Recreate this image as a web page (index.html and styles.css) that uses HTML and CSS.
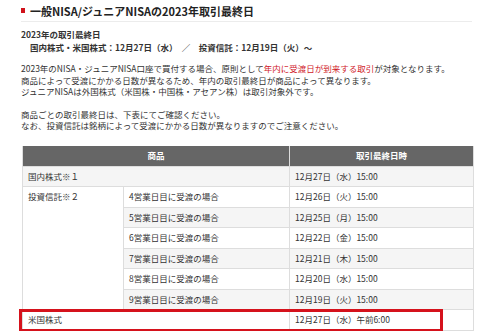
FILE: index.html
```html
<!DOCTYPE html>
<html lang="ja">
<head>
<meta charset="utf-8">
<link rel="stylesheet" href="styles.css">
</head>
<body>
<div class="page">
  <h2 class="title"><span class="mark"></span>一般NISA/ジュニアNISAの2023年取引最終日</h2>
  <div class="lastday">
    <p class="lastday-head">2023年の取引最終日</p>
    <p class="lastday-body">国内株式・米国株式：12月27日（水）　／　投資信託：12月19日（火）～</p>
  </div>
  <p class="para">2023年のNISA・ジュニアNISA口座で買付する場合、原則として<span class="red">年内に受渡日が到来する取引</span>が対象となります。<br>商品によって受渡にかかる日数が異なるため、年内の取引最終日が商品によって異なります。<br>ジュニアNISAは外国株式（米国株・中国株・アセアン株）は取引対象外です。</p>
  <p class="para">商品ごとの取引最終日は、下表にてご確認ください。<br>なお、投資信託は銘柄によって受渡にかかる日数が異なりますのでご注意ください。</p>
  <div class="table-wrap">
    <table class="tbl">
      <colgroup><col class="c1"><col class="c2"><col class="c3"></colgroup>
      <thead>
        <tr><th colspan="2">商品</th><th>取引最終日時</th></tr>
      </thead>
      <tbody>
        <tr class="g"><td colspan="2">国内株式※１</td><td>12月27日（水）15:00</td></tr>
        <tr><td rowspan="6" class="w">投資信託※２</td><td>4営業日目に受渡の場合</td><td>12月26日（火）15:00</td></tr>
        <tr class="g"><td>5営業日目に受渡の場合</td><td>12月25日（月）15:00</td></tr>
        <tr><td>6営業日目に受渡の場合</td><td>12月22日（金）15:00</td></tr>
        <tr class="g"><td>7営業日目に受渡の場合</td><td>12月21日（木）15:00</td></tr>
        <tr><td>8営業日目に受渡の場合</td><td>12月20日（水）15:00</td></tr>
        <tr class="g"><td>9営業日目に受渡の場合</td><td>12月19日（火）15:00</td></tr>
        <tr><td colspan="2">米国株式</td><td>12月27日（水）午前6:00</td></tr>
      </tbody>
    </table>
    <div class="highlight"></div>
  </div>
</div>
</body>
</html>
```
FILE: styles.css
```css
html, body {
  margin: 0;
  padding: 0;
  background: #fff;
}
.page {
  padding: 0 8px 0 21px;
  font-family: "Noto Sans CJK JP", "Noto Sans", sans-serif;
  font-size: 8.5px;
  line-height: 11.5px;
  color: #333;
}
.title {
  margin: 0;
  height: 22px;
  box-sizing: border-box;
  border-bottom: 1px solid #ececec;
  font-size: 11px;
  line-height: 22px;
  font-weight: bold;
  color: #222;
  display: flex;
  align-items: center;
  gap: 5px;
}
.mark {
  display: block;
  width: 4px;
  height: 5px;
  background: #d0121b;
  margin-top: -1px;
}
.lastday {
  margin-top: 7px;
  font-weight: bold;
  color: #333;
}
.lastday p {
  margin: 0;
}
.lastday-body {
  padding-left: 9px;
  margin-top: 1px !important;
}
.para {
  margin: 10px 0 0;
}
.para + .para {
  margin-top: 11px;
}
.red {
  color: #d0212a;
}
.table-wrap {
  position: relative;
  margin-top: 14px;
  margin-left: 1px;
  width: 451px;
}
.tbl {
  width: 451px;
  border-collapse: collapse;
  table-layout: fixed;
}
.c1 { width: 101px; }
.c2 { width: 166px; }
.c3 { width: 184px; }
.tbl th {
  background: #666;
  color: #fff;
  font-weight: bold;
  height: 20px;
  padding: 0;
  border: 1px solid #ddd;
  border-top: none;
  text-align: center;
}
.tbl td {
  height: 20.5px;
  box-sizing: border-box;
  padding: 0 5px;
  border: 1px solid #ddd;
  vertical-align: middle;
  text-align: left;
}
.tbl td.w {
  vertical-align: top;
  padding-top: 4px;
  background: #fff;
}
.tbl tr.g td {
  background: #f5f5f5;
}
.highlight {
  position: absolute;
  left: -3px;
  top: 163px;
  width: 424px;
  height: 23px;
  box-sizing: border-box;
  border: 3px solid #d5121c;
}
```
